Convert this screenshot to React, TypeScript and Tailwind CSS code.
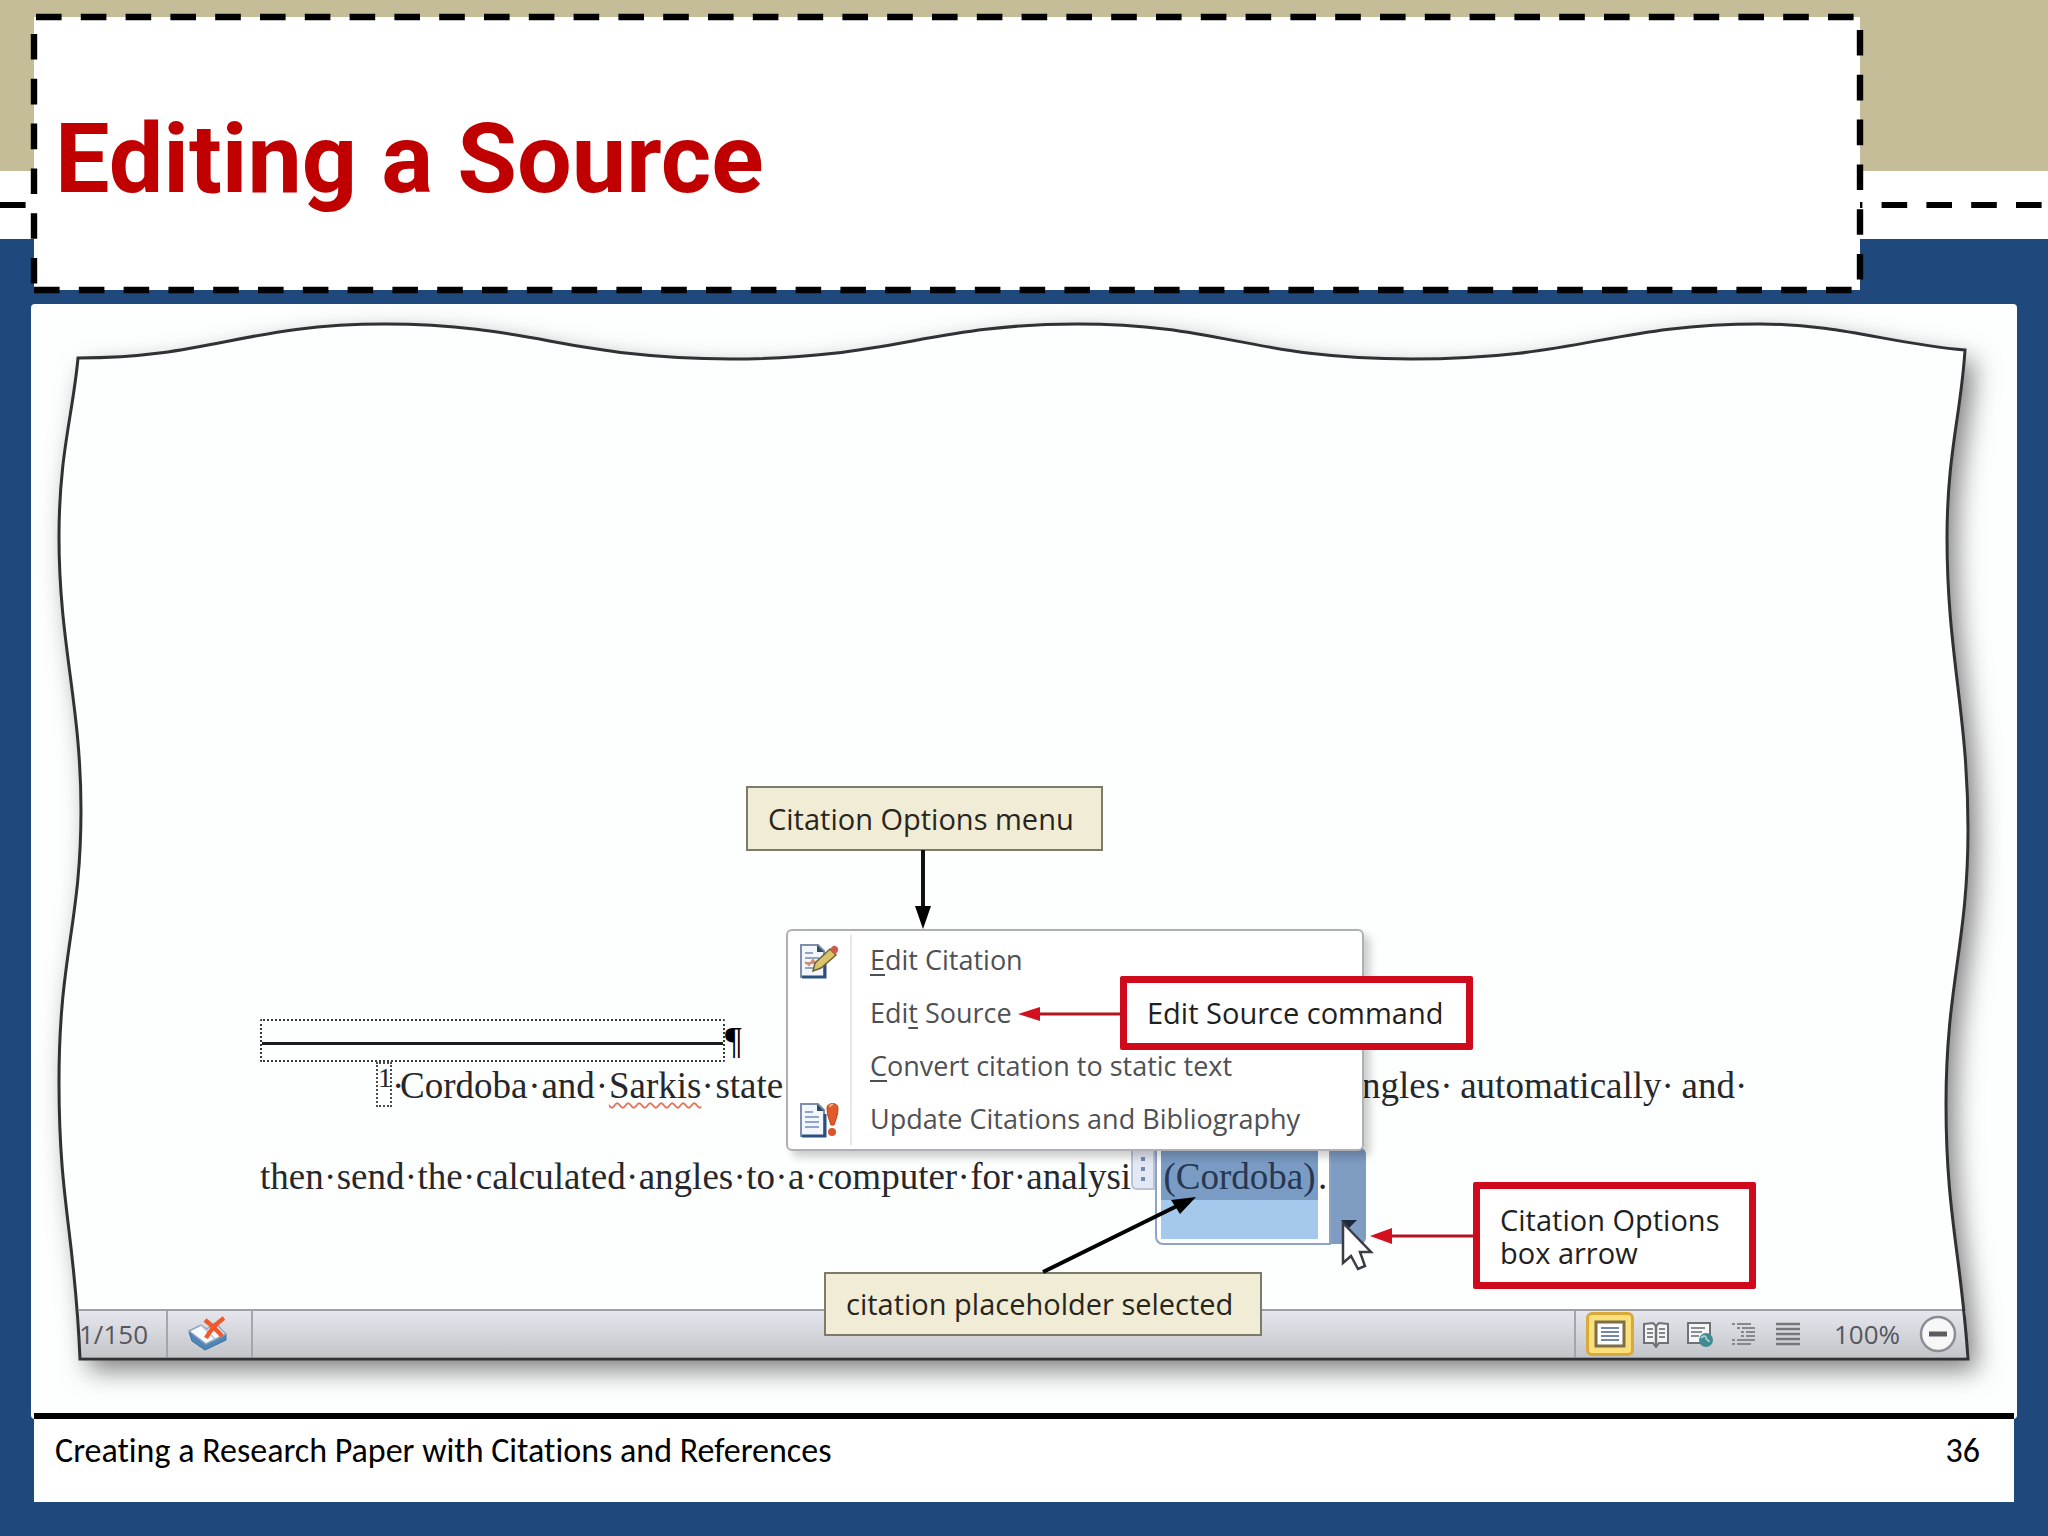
import type { ReactNode } from "react";

const PAPER =
  "M47 54 C180 54 215 20 354 20 C500 20 540 55 700 55 C860 55 900 20 1046 20 C1192 20 1220 55 1380 55 C1550 55 1580 20 1729 20 C1810 20 1860 40 1934 46 C1930 110 1916 150 1916 234 C1916 350 1937 410 1937 525 C1937 640 1915 680 1915 800 C1915 910 1930 950 1937 1055 L49 1055 C44 930 28 900 28 778 C28 650 50 620 50 506 C50 400 28 340 28 233 C28 150 42 110 47 54 Z";

function DashedFrame() {
  return (
    <svg
      className="pointer-events-none absolute inset-0 h-full w-full overflow-visible"
      stroke="#000"
      strokeWidth="6.4"
      strokeDasharray="25.6 19.2"
      aria-hidden="true"
    >
      <line x1="2" y1="0" x2="100%" y2="0" />
      <line x1="0" y1="17" x2="0" y2="100%" />
      <line x1="100%" y1="13" x2="100%" y2="100%" />
      <line x1="0" y1="100%" x2="100%" y2="100%" />
    </svg>
  );
}

function PageLines() {
  return (
    <>
      <path d="M2 2h17l6 6v26H2z" fill="#f3f7fd" stroke="#7d8fac" strokeWidth="2" />
      <path d="M18 2l7 7h-7z" fill="#2c4a63" />
      <path d="M3 34h23V12" fill="none" stroke="#29507f" strokeWidth="3" />
      <path d="M6 10h8M6 15h14M6 20h14M6 25h14" stroke="#8ea6c8" strokeWidth="2" />
    </>
  );
}

function EditCitationIcon() {
  return (
    <svg className="h-9 w-10" viewBox="0 0 40 36" aria-hidden="true">
      <PageLines />
      <path d="M6 19l4 3 4-5 3 4" fill="none" stroke="#e2895a" strokeWidth="2" />
      <path d="M14 28l2-8L31 6l6 6-15 13z" fill="#d9c46c" stroke="#6d6334" strokeWidth="1.5" />
      <path d="M31 6l3-3c3-1 6 2 5 5l-3 4z" fill="#cf5a4c" />
    </svg>
  );
}

function UpdateIcon() {
  return (
    <svg className="h-9 w-10" viewBox="0 0 40 36" aria-hidden="true">
      <PageLines />
      <path d="M28 6c0-6 11-6 11 0 0 7-2 11-4 17h-3c-2-6-4-10-4-17z" fill="#e2592a" stroke="#b8431c" />
      <path d="M31 5c0-2 2-3 3-2" stroke="#f6b08c" strokeWidth="2" fill="none" />
      <circle cx="33" cy="30" r="4" fill="#d9552b" />
    </svg>
  );
}

function ProofingIcon() {
  return (
    <svg className="h-10 w-11" viewBox="0 0 44 40" aria-hidden="true">
      <path d="M3 18l3 9 13 9 21-10v-6L20 30z" fill="#4f86b8" stroke="#3d6f9e" />
      <path d="M3 17l12-6 6 4 8-6 11 11-20 10z" fill="#f7f9fc" stroke="#8fa3bd" strokeWidth="1.5" />
      <path d="M15 11l14 14" stroke="#b5c3d6" strokeWidth="1.5" />
      <path d="M19 6c5 4 12 10 17 16M38 4C31 9 25 15 20 24" stroke="#ee5a2e" strokeWidth="4.5" fill="none" />
    </svg>
  );
}

function PrintLayoutIcon() {
  return (
    <svg className="h-7 w-8" viewBox="0 0 32 28" aria-hidden="true">
      <path d="M2 2h28v24H2z" fill="#fff" stroke="#7c6f47" strokeWidth="3" />
      <path d="M7 8h18M7 12h18M7 16h18M7 20h18" stroke="#7387ab" strokeWidth="2" />
    </svg>
  );
}

function ReadingIcon() {
  return (
    <svg className="h-7 w-7" viewBox="0 0 28 28" aria-hidden="true">
      <path d="M2 4l9-1 3 3 3-3 9 1v19h-9l-3 4-3-4H2z" fill="#f4f4f5" stroke="#6e7176" strokeWidth="2" />
      <path d="M14 6v20" stroke="#6e7176" strokeWidth="2.5" />
      <path d="M5 9h6M5 13h6M5 17h6M17 9h6M17 13h6M17 17h6" stroke="#83868b" strokeWidth="1.8" />
    </svg>
  );
}

function WebLayoutIcon() {
  return (
    <svg className="h-7 w-7" viewBox="0 0 28 28" aria-hidden="true">
      <path d="M2 3h22v20H2z" fill="#f6f6f7" stroke="#6e7176" strokeWidth="2" />
      <path d="M5 8h14M5 12h11M5 16h8" stroke="#8b8e93" strokeWidth="1.8" />
      <circle cx="20" cy="20" r="7" fill="#3f8b93" />
      <path d="M15 18c3-3 5-2 5 0s3 2 3 4" stroke="#9fd0c8" strokeWidth="2" fill="none" />
    </svg>
  );
}

function OutlineIcon() {
  return (
    <svg className="h-7 w-7" viewBox="0 0 28 28" stroke="#85888d" strokeWidth="2" aria-hidden="true">
      <path d="M2 4h3M7 4h14M7 8h3M12 8h13M11 12h3M16 12h9M11 16h3M16 16h9M2 20h3M7 20h18M2 24h3M7 24h14" />
    </svg>
  );
}

function DraftIcon() {
  return (
    <svg className="h-7 w-7" viewBox="0 0 28 28" stroke="#74777c" strokeWidth="2.4" aria-hidden="true">
      <path d="M2 4h24M2 9h24M2 14h24M2 19h24M2 24h24" />
    </svg>
  );
}

function ViewButton({ label, active = false, children }: { label: string; active?: boolean; children: ReactNode }) {
  return (
    <button
      type="button"
      aria-label={label}
      className={
        active
          ? "flex h-11 w-12 items-center justify-center rounded-md border-3 border-[#d9a93a] bg-[#fbe07a]"
          : "flex h-11 w-11 items-center justify-center"
      }
    >
      {children}
    </button>
  );
}

function MenuItem({ icon, children }: { icon?: ReactNode; children: ReactNode }) {
  return (
    <button
      type="button"
      role="menuitem"
      className="flex h-[53px] w-full items-center text-left text-[27px] whitespace-nowrap text-[#4f5054]"
    >
      <span className="flex w-[62px] shrink-0 justify-center">{icon}</span>
      <span className="pl-5">{children}</span>
    </button>
  );
}

function CitationMenu() {
  return (
    <div
      role="menu"
      className="absolute top-[625px] left-[755px] w-[578px] rounded-md border-2 border-[#aeb0b6] bg-white py-[3px] shadow-[6px_6px_8px_rgba(0,0,0,0.2)]"
    >
      <div className="absolute inset-y-1 left-[62px] w-0.5 bg-[#e6e7ea]" />
      <MenuItem icon={<EditCitationIcon />}>
        <u className="underline-offset-4">E</u>dit Citation
      </MenuItem>
      <MenuItem>
        Edi<u className="underline-offset-4">t</u> Source
      </MenuItem>
      <MenuItem>
        <u className="underline-offset-4">C</u>onvert citation to static text
      </MenuItem>
      <MenuItem icon={<UpdateIcon />}>Update Citations and Bibliography</MenuItem>
    </div>
  );
}

function Words({ words, gap }: { words: string[]; gap: string }) {
  return (
    <>
      {words.map((word, i) => (
        <span key={i} className="flex">
          {i > 0 && <span className={gap}>·</span>}
          <span>{word}</span>
        </span>
      ))}
    </>
  );
}

function DocumentText() {
  return (
    <div className="relative pt-[715px] pr-[272px] pl-[229px] font-['Liberation_Serif',serif] text-[37px] leading-[48px] text-[#26272b]">
      <div className="flex h-[43px] items-center">
        <div className="flex h-full w-[465px] items-center rounded-xs border-2 border-dotted border-[#3a3b3f]">
          <div className="mt-1.5 h-[3px] w-full bg-[#1b1c1f]" />
        </div>
        <span className="text-black">¶</span>
      </div>
      <div className="flex">
        <span className="ml-[116px] h-[45px] w-4 border-2 border-dotted border-[#4a4b50] text-center text-[28px] leading-7">1</span>
        <span className="w-2">·</span>
        <span>Cordoba</span>
        <span className="w-3.5 text-center">·</span>
        <span>and</span>
        <span className="w-3.5 text-center">·</span>
        <span className="underline decoration-[#e2795f] decoration-wavy decoration-2 underline-offset-4">Sarkis</span>
        <span className="w-3.5">·</span>
        <span>state</span>
        <span className="ml-auto">angles</span>
        <span className="w-5">·</span>
        <span>automatically</span>
        <span className="w-5">·</span>
        <span>and</span>
        <span className="w-2.5">·</span>
      </div>
      <div className="mt-[43px] flex">
        <Words
          words={["then", "send", "the", "calculated", "angles", "to", "a", "computer", "for", "analysis"]}
          gap="w-[13px] text-center"
        />
      </div>
    </div>
  );
}

function CitationPlaceholder() {
  return (
    <div className="absolute top-[844px] left-[1100px] flex items-start font-['Liberation_Serif',serif] text-[37px]">
      <div className="flex h-[42px] w-6 flex-col items-center justify-center gap-1.5 rounded-bl-md border-2 border-[#b9c3d6] bg-[#e3e9f4]">
        <span className="h-1 w-1 bg-[#7389ad]" />
        <span className="h-1 w-1 bg-[#7389ad]" />
        <span className="h-1 w-1 bg-[#7389ad]" />
      </div>
      <div className="flex h-[97px] w-[176px] rounded-bl-lg border-2 border-[#8fa3c4] bg-white pb-1 pl-1">
        <div className="h-full w-[157px] bg-[#a5c9ec]">
          <div className="h-[50px] bg-[#7a9bc4] pt-1 text-center leading-[46px] text-[#26374f]">(Cordoba)</div>
        </div>
        <span className="pt-1 leading-[46px] text-[#26272b]">.</span>
      </div>
      <button
        type="button"
        aria-label="Citation Options"
        className="flex h-[96px] w-[35px] items-end justify-center rounded-r-md bg-[#7f9cc3] pb-4"
      >
        <svg className="h-2 w-4" viewBox="0 0 16 8" aria-hidden="true">
          <path d="M0 0h16L8 8z" fill="#1d2a3d" />
        </svg>
      </button>
    </div>
  );
}

function StatusBar() {
  return (
    <div className="relative mr-[51px] ml-12 flex h-12 items-center border-t-2 border-[#9c9fa5] bg-linear-to-b from-[#e6e7ee] to-[#c3c5c9] text-[26px] text-[#55575c]">
      <span className="w-[89px] border-r-2 border-[#a3a6ab] leading-[46px]">1/150</span>
      <button type="button" aria-label="Proofing errors" className="flex h-full w-[85px] items-center justify-center border-r-2 border-[#a3a6ab] pr-1">
        <ProofingIcon />
      </button>
      <div className="ml-auto flex h-full items-center border-l-2 border-[#a3a6ab] pl-2.5">
        <ViewButton label="Print Layout" active>
          <PrintLayoutIcon />
        </ViewButton>
        <ViewButton label="Full Screen Reading">
          <ReadingIcon />
        </ViewButton>
        <ViewButton label="Web Layout">
          <WebLayoutIcon />
        </ViewButton>
        <ViewButton label="Outline">
          <OutlineIcon />
        </ViewButton>
        <ViewButton label="Draft">
          <DraftIcon />
        </ViewButton>
        <span className="ml-6">100%</span>
        <button type="button" aria-label="Zoom out" className="mr-2 ml-[18px]">
          <svg className="h-10 w-10" viewBox="0 0 40 40" aria-hidden="true">
            <circle cx="20" cy="20" r="17" fill="#f7f7f8" stroke="#8b8d92" strokeWidth="2.5" />
            <path d="M11 20h18" stroke="#5a5c61" strokeWidth="5" />
          </svg>
        </button>
      </div>
    </div>
  );
}

function Arrows() {
  return (
    <svg className="pointer-events-none absolute inset-0 h-full w-full" aria-hidden="true">
      <path d="M892 546v60" stroke="#111" strokeWidth="4" />
      <path d="M884 602h16l-8 23z" fill="#000" />
      <path d="M1090 710h-82" stroke="#b5121f" strokeWidth="3" />
      <path d="M987 710l22-7v14z" fill="#d3101f" />
      <path d="M1012 968l136-67" stroke="#000" strokeWidth="4" />
      <path d="M1165 893l-16 17-9-14z" fill="#000" />
      <path d="M1443 932h-84" stroke="#b5121f" strokeWidth="3" />
      <path d="M1339 932l22-8v16z" fill="#d3101f" />
      <path d="M1312 919v40l8-7 7 13 7-3-5-14h11z" fill="#fff" stroke="#3c3d44" strokeWidth="2.5" />
    </svg>
  );
}

function Figure() {
  return (
    <section className="relative mr-[31px] ml-[31px] h-[1115px] rounded-sm bg-[#fdfefe] font-['Open_Sans',sans-serif]">
      <svg className="absolute inset-0 h-full w-full" viewBox="0 0 1986 1115" preserveAspectRatio="none" aria-hidden="true">
        <defs>
          <filter id="soft" x="-5%" y="-5%" width="110%" height="112%">
            <feDropShadow dx="9" dy="11" stdDeviation="13" floodColor="#000" floodOpacity="0.5" />
          </filter>
        </defs>
        <path d={PAPER} fill="#fdfefe" filter="url(#soft)" />
      </svg>
      <DocumentText />
      <div className="mt-[108px]">
        <StatusBar />
      </div>
      <svg className="pointer-events-none absolute inset-0 h-full w-full" viewBox="0 0 1986 1115" preserveAspectRatio="none" aria-hidden="true">
        <path d={PAPER} fill="none" stroke="#303135" strokeWidth="3" />
      </svg>
      <CitationPlaceholder />
      <CitationMenu />
      <div className="absolute top-[482px] left-[715px] flex h-[65px] w-[357px] items-center border-2 border-[#7c7b68] bg-[#f0ecd6] pl-5 text-[29px] font-medium whitespace-nowrap text-[#28261c]">
        Citation Options menu
      </div>
      <div className="absolute top-[968px] left-[793px] flex h-[64px] w-[438px] items-center border-2 border-[#7c7b68] bg-[#f0ecd6] pl-5 text-[29px] font-medium whitespace-nowrap text-[#28261c]">
        citation placeholder selected
      </div>
      <div className="absolute top-[672px] left-[1089px] flex h-[74px] w-[353px] items-center rounded-xs border-7 border-[#cf0a1c] bg-white pl-5 text-[29px] font-medium whitespace-nowrap text-[#1f1f22]">
        Edit Source command
      </div>
      <div className="absolute top-[878px] left-[1442px] flex h-[107px] w-[283px] items-center rounded-xs border-7 border-[#cf0a1c] bg-white pl-5 text-[29px] leading-[33px] font-medium text-[#1f1f22]">
        Citation Options
        <br />
        box arrow
      </div>
      <Arrows />
    </section>
  );
}

export default function App() {
  return (
    <main className="min-h-screen bg-[#1f497d] pb-[34px]">
      <header className="grid h-[304px]">
        <div className="[grid-area:1/1]">
          <div className="h-[171px] bg-[#c4bd97]" />
          <div className="flex h-[68px] items-center bg-white">
            <svg className="h-1.5 w-full" aria-hidden="true">
              <line x1="0" y1="3" x2="100%" y2="3" stroke="#000" strokeWidth="6.4" strokeDasharray="25.6 19.2" />
            </svg>
          </div>
        </div>
        <div className="relative mt-[17px] mr-[188px] ml-[34px] flex h-[273px] items-center bg-white pt-3 pl-[21px] [grid-area:1/1]">
          <h1 className="font-[Roboto,sans-serif] text-[97px] font-bold whitespace-nowrap text-[#c00000]">Editing a Source</h1>
          <DashedFrame />
        </div>
      </header>
      <Figure />
      <footer className="relative mx-[34px] -mt-1.5 flex h-[89px] items-center justify-between border-t-6 border-black bg-white pr-[34px] pb-5 pl-[21px] font-[Carlito,Lato,sans-serif] text-[34px] text-black [font-variant-ligatures:none]">
        <span>Creating a Research Paper with Citations and References</span>
        <span>36</span>
      </footer>
    </main>
  );
}
